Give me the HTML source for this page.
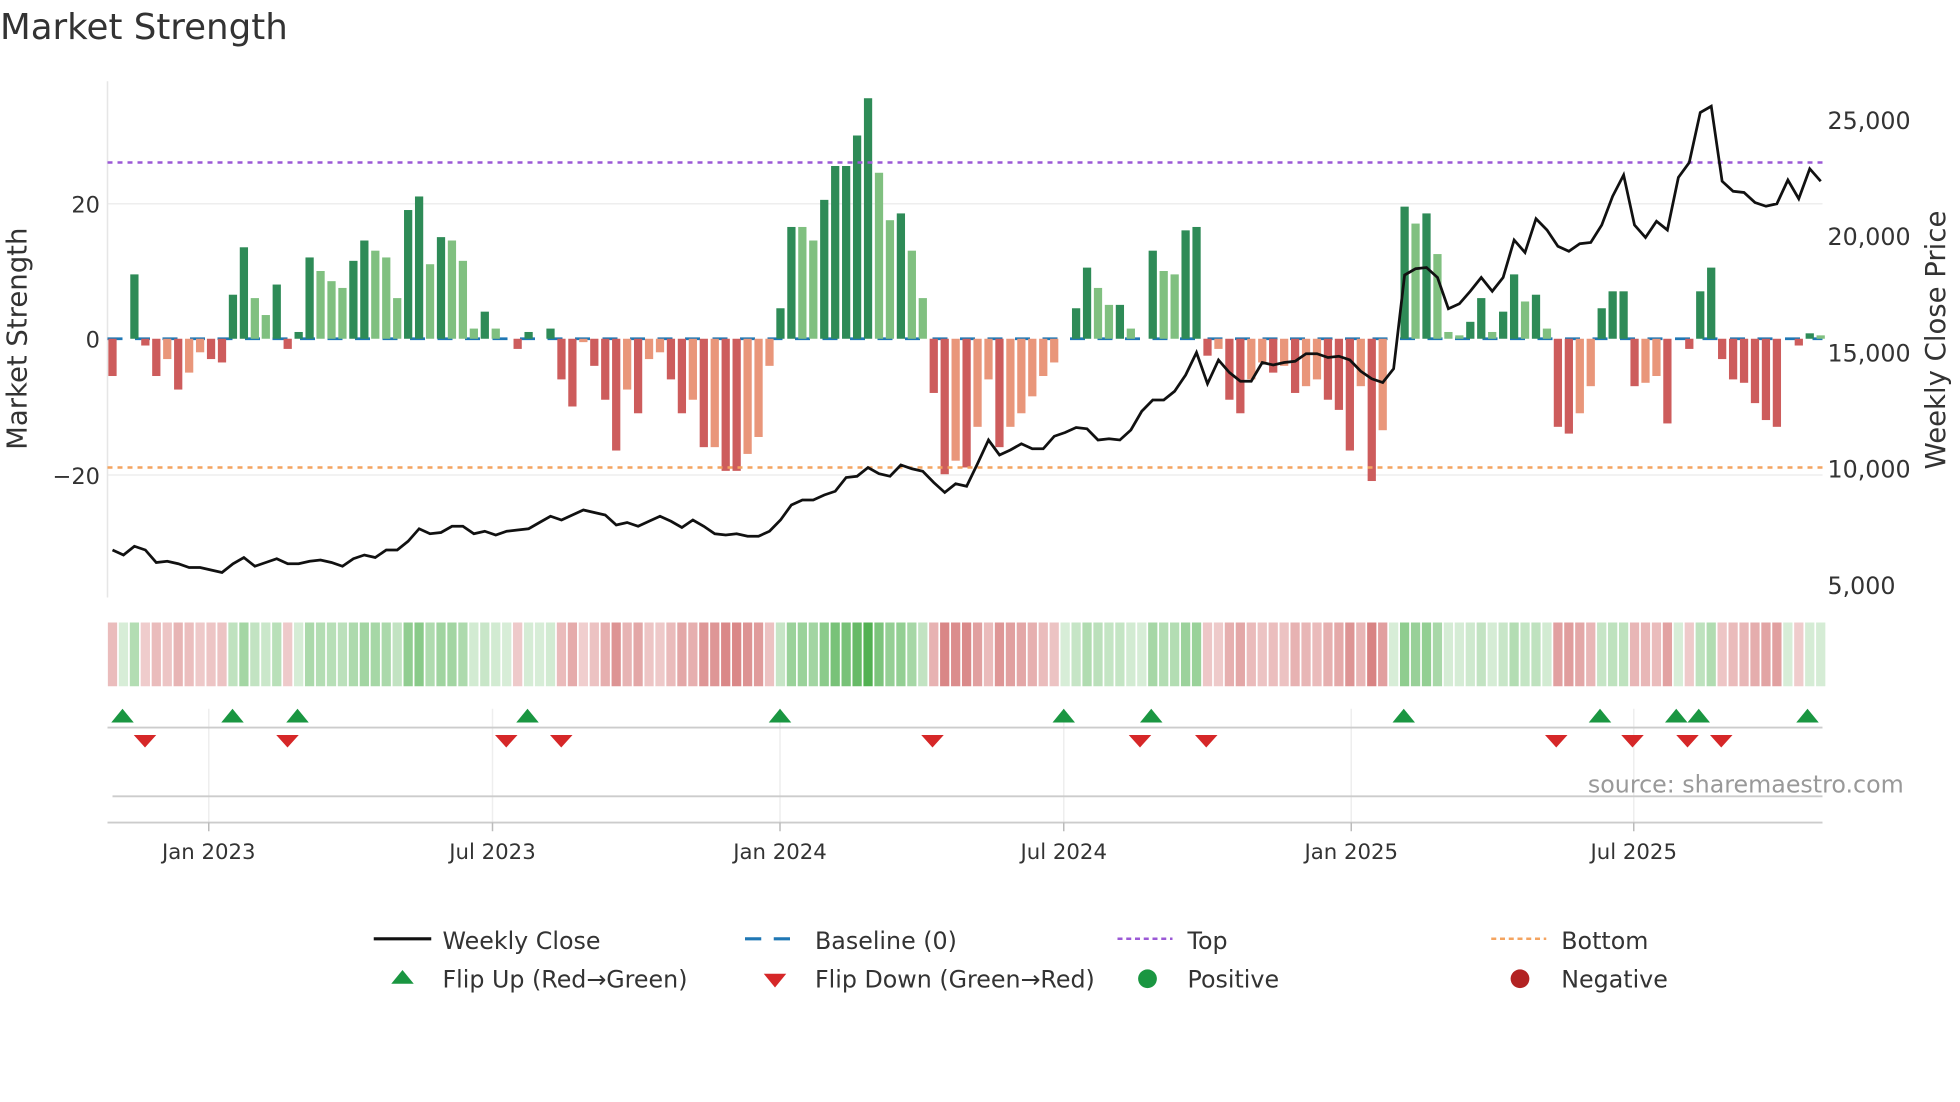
<!DOCTYPE html>
<html><head><meta charset="utf-8">
<style>
html,body{margin:0;padding:0;background:#fff;}
svg{display:block;font-family:"DejaVu Sans","Liberation Sans",sans-serif;}
</style></head>
<body>
<svg id="s" width="1960" height="1102" viewBox="0 0 1568 881.6" xmlns="http://www.w3.org/2000/svg">
<text x="0" y="31" font-size="28.5" fill="#333">Market Strength</text>
<line x1="86" y1="163" x2="1458" y2="163" stroke="#eee" stroke-width="1.2"/>
<line x1="86" y1="380" x2="1458" y2="380" stroke="#eee" stroke-width="1.2"/>
<line x1="86" y1="65" x2="86" y2="478" stroke="#e6e6e6" stroke-width="1.2"/>
<g font-size="18" fill="#333" text-anchor="end">
<text x="80" y="170">20</text><text x="80" y="278">0</text><text x="80" y="387">−20</text>
</g>
<g font-size="19" fill="#333">
<text x="1462" y="103">25,000</text><text x="1462" y="196">20,000</text><text x="1462" y="289">15,000</text><text x="1462" y="382">10,000</text><text x="1462" y="475">5,000</text>
</g>
<text transform="translate(21,271) rotate(-90)" font-size="22" fill="#333" text-anchor="middle">Market Strength</text>
<text transform="translate(1556,272) rotate(-90)" font-size="22" fill="#333" text-anchor="middle">Weekly Close Price</text>
<line x1="86" y1="271" x2="1458" y2="271" stroke="#1f77b4" stroke-width="2.2" stroke-dasharray="12,10"/>
<g id="bars"></g>
<line x1="86" y1="130" x2="1458" y2="130" stroke="#9b59d6" stroke-width="2" stroke-dasharray="4,4"/>
<line x1="86" y1="374" x2="1458" y2="374" stroke="#f4a460" stroke-width="2" stroke-dasharray="4,4"/>
<polyline id="pl" fill="none" stroke="#111" stroke-width="2.2"/>
<g id="heat"></g>
<g stroke="#eee" stroke-width="1.2">
<line x1="167" y1="567" x2="167" y2="658"/><line x1="394" y1="567" x2="394" y2="658"/><line x1="624" y1="567" x2="624" y2="658"/><line x1="851" y1="567" x2="851" y2="658"/><line x1="1081" y1="567" x2="1081" y2="658"/><line x1="1307" y1="567" x2="1307" y2="658"/>
</g>
<line x1="86" y1="582" x2="1458" y2="582" stroke="#ccc" stroke-width="1.5"/>
<line x1="90" y1="637" x2="1458" y2="637" stroke="#ccc" stroke-width="1.5"/>
<line x1="86" y1="658" x2="1458" y2="658" stroke="#ccc" stroke-width="1.5"/>
<g stroke="#bbb" stroke-width="1.2">
<line x1="167" y1="658" x2="167" y2="665"/><line x1="394" y1="658" x2="394" y2="665"/><line x1="624" y1="658" x2="624" y2="665"/><line x1="851" y1="658" x2="851" y2="665"/><line x1="1081" y1="658" x2="1081" y2="665"/><line x1="1307" y1="658" x2="1307" y2="665"/>
</g>
<g id="mk"></g>
<g font-size="17" fill="#333" text-anchor="middle">
<text x="167" y="687">Jan 2023</text><text x="394" y="687">Jul 2023</text><text x="624" y="687">Jan 2024</text><text x="851" y="687">Jul 2024</text><text x="1081" y="687">Jan 2025</text><text x="1307" y="687">Jul 2025</text>
</g>
<text x="1523" y="634" font-size="19" fill="#999" text-anchor="end">source: sharemaestro.com</text>
<g font-size="19" fill="#333">
<line x1="299" y1="751" x2="345" y2="751" stroke="#111" stroke-width="2.5"/><text x="354" y="759">Weekly Close</text>
<line x1="596" y1="751" x2="640" y2="751" stroke="#1f77b4" stroke-width="2.5" stroke-dasharray="13,10"/><text x="652" y="759">Baseline (0)</text>
<line x1="894" y1="751" x2="938" y2="751" stroke="#9b59d6" stroke-width="2" stroke-dasharray="4,3"/><text x="950" y="759">Top</text>
<line x1="1193" y1="751" x2="1237" y2="751" stroke="#f4a460" stroke-width="2" stroke-dasharray="4,3"/><text x="1249" y="759">Bottom</text>
<polygon points="313,787 322,776 331,787" fill="#1a9641"/><text x="354" y="790">Flip Up (Red→Green)</text>
<polygon points="611,779 629,779 620,790" fill="#d62728"/><text x="652" y="790">Flip Down (Green→Red)</text>
<circle cx="918" cy="783" r="7.5" fill="#1a9641"/><text x="950" y="790">Positive</text>
<circle cx="1216" cy="783" r="7.5" fill="#b22222"/><text x="1249" y="790">Negative</text>
</g>
</svg>
<script>
var V=[[-5.5,'r'],[0,'z'],[9.5,'G'],[-1,'r'],[-5.5,'r'],[-3,'o'],[-7.5,'r'],[-5,'o'],[-2,'o'],[-3,'r'],[-3.5,'r'],[6.5,'G'],[13.5,'G'],[6,'g'],[3.5,'g'],[8,'G'],[-1.5,'r'],[1,'G'],[12,'G'],[10,'g'],[8.5,'g'],[7.5,'g'],[11.5,'G'],[14.5,'G'],[13,'g'],[12,'g'],[6,'g'],[19,'G'],[21,'G'],[11,'g'],[15,'G'],[14.5,'g'],[11.5,'g'],[1.5,'g'],[4,'G'],[1.5,'g'],[0,'z'],[-1.5,'r'],[1,'G'],[0,'z'],[1.5,'G'],[-6,'r'],[-10,'r'],[-0.5,'o'],[-4,'r'],[-9,'r'],[-16.5,'r'],[-7.5,'o'],[-11,'r'],[-3,'o'],[-2,'o'],[-6,'r'],[-11,'r'],[-9,'o'],[-16,'r'],[-16,'o'],[-19.5,'r'],[-19.5,'r'],[-17,'o'],[-14.5,'o'],[-4,'o'],[4.5,'G'],[16.5,'G'],[16.5,'g'],[14.5,'g'],[20.5,'G'],[25.5,'G'],[25.5,'G'],[30,'G'],[35.5,'G'],[24.5,'g'],[17.5,'g'],[18.5,'G'],[13,'g'],[6,'g'],[-8,'r'],[-20,'r'],[-18,'o'],[-19,'r'],[-13,'o'],[-6,'o'],[-16,'r'],[-13,'o'],[-11,'o'],[-8.5,'o'],[-5.5,'o'],[-3.5,'o'],[0,'z'],[4.5,'G'],[10.5,'G'],[7.5,'g'],[5,'g'],[5,'G'],[1.5,'g'],[0,'z'],[13,'G'],[10,'g'],[9.5,'g'],[16,'G'],[16.5,'G'],[-2.5,'r'],[-1.5,'o'],[-9,'r'],[-11,'r'],[-6,'o'],[-3.5,'o'],[-5,'r'],[-4,'o'],[-8,'r'],[-7,'o'],[-6,'o'],[-9,'r'],[-10.5,'r'],[-16.5,'r'],[-7,'o'],[-21,'r'],[-13.5,'o'],[0,'z'],[19.5,'G'],[17,'g'],[18.5,'G'],[12.5,'g'],[1,'g'],[0.5,'g'],[2.5,'G'],[6,'G'],[1,'g'],[4,'G'],[9.5,'G'],[5.5,'g'],[6.5,'G'],[1.5,'g'],[-13,'r'],[-14,'r'],[-11,'o'],[-7,'o'],[4.5,'G'],[7,'G'],[7,'G'],[-7,'r'],[-6.5,'o'],[-5.5,'o'],[-12.5,'r'],[0,'z'],[-1.5,'r'],[7,'G'],[10.5,'G'],[-3,'r'],[-6,'r'],[-6.5,'r'],[-9.5,'r'],[-12,'r'],[-13,'r'],[0,'z'],[-1,'r'],[0.8,'G'],[0.5,'g']];
var C={G:'#2e8b57',g:'#80c080',r:'#cd5c5c',o:'#e9967a',z:'#fff'};
var P=[440,444,437,440,450,449,451,454,454,456,458,451,446,453,450,447,451,451,449,448,450,453,447,444,446,440,440,433,423,427,426,421,421,427,425,428,425,424,423,418,413,416,412,408,410,412,420,418,421,417,413,417,422,416,421,427,428,427,429,429,425,416,404,400,400,396,393,382,381,374,379,381,372,375,377,386,394,387,389,371,352,364,360,355,359,359,349,346,342,343,352,351,352,344,329,320,320,313,300,282,307,288,298,305,305,290,292,290,289,283,283,286,285,288,297,303,306,295,220,215,214,222,247,243,233,222,233,222,192,202,175,184,197,201,195,194,180,157,140,180,190,177,184,142,130,90,85,145,153,154,162,165,163,144,159,135,145];
var NS='http://www.w3.org/2000/svg',b=document.getElementById('bars'),h=document.getElementById('heat'),pts=[];
function el(t,a,p){var e=document.createElementNS(NS,t);for(var k in a)e.setAttribute(k,a[k]);p.appendChild(e);return e;}
for(var i=0;i<V.length;i++){var x=90+8.76*i,v=V[i][0],y=271-v*5.42;
 if(v!=0)el('rect',{x:x-3.3,y:Math.min(y,271),width:6.6,height:Math.abs(v*5.42),fill:C[V[i][1]]},b);
 var a=0.22+Math.min(Math.abs(v)/36,1)*0.75;
 el('rect',{x:x-3.7,y:498,width:7.4,height:51,fill:v>=0?'#2ca02c':'#c85050','fill-opacity':(v>=0?a*0.85:Math.min(a*1.0+0.05,1)).toFixed(2)},h);
 pts.push(x.toFixed(1)+','+P[i]);}
document.getElementById('pl').setAttribute('points',pts.join(' '));
var mk=document.getElementById('mk');
[98,186,238,422,624,851,921,1123,1280,1341,1359,1446].forEach(function(x){el('polygon',{points:(x-9)+',578 '+x+',567 '+(x+9)+',578',fill:'#1a9641'},mk);});
[116,230,405,449,746,912,965,1245,1306,1350,1377].forEach(function(x){el('polygon',{points:(x-9)+',588 '+(x+9)+',588 '+x+',598',fill:'#d62728'},mk);});
</script>
</body></html>
